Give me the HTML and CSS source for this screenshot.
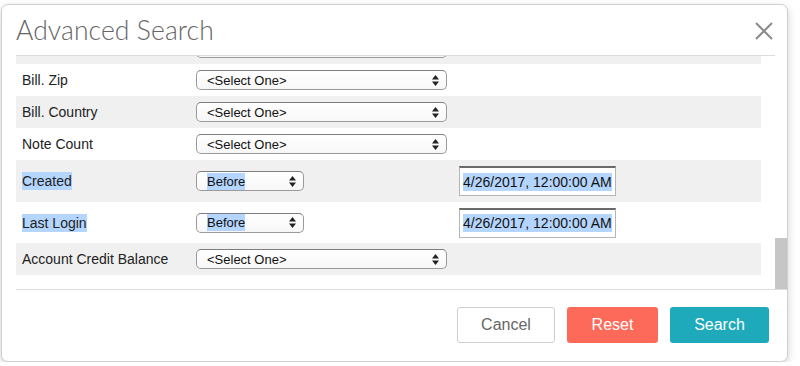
FILE: index.html
```html
<!DOCTYPE html>
<html lang="en">
<head>
  <meta charset="UTF-8">
  <title>Advanced Search</title>
  <link rel="stylesheet" href="styles.css">
</head>
<body>
  <div class="modal">
    <div class="modal-header">
      <h1>Advanced Search</h1>
      <span class="close">
        <svg width="18" height="18" viewBox="0 0 18 18"><path d="M1 1 L17 17 M17 1 L1 17" stroke="#8a8a8a" stroke-width="2" fill="none"/></svg>
      </span>
    </div>

    <div class="modal-body">
      <div class="rows">
        <!-- row scrolled mostly out of view, only its bottom edge shows -->
        <div class="row shade">
          <div class="label"></div>
          <div class="select wide"></div>
        </div>
        <div class="row">
          <div class="label">Bill. Zip</div>
          <div class="select wide"><span>&lt;Select One&gt;</span><svg class="arrows" width="7" height="11" viewBox="0 0 7 11"><path d="M3.5 0 L7 4.5 H0 Z M0 6.5 H7 L3.5 11 Z" fill="#222"/></svg></div>
        </div>
        <div class="row shade">
          <div class="label">Bill. Country</div>
          <div class="select wide"><span>&lt;Select One&gt;</span><svg class="arrows" width="7" height="11" viewBox="0 0 7 11"><path d="M3.5 0 L7 4.5 H0 Z M0 6.5 H7 L3.5 11 Z" fill="#222"/></svg></div>
        </div>
        <div class="row">
          <div class="label">Note Count</div>
          <div class="select wide"><span>&lt;Select One&gt;</span><svg class="arrows" width="7" height="11" viewBox="0 0 7 11"><path d="M3.5 0 L7 4.5 H0 Z M0 6.5 H7 L3.5 11 Z" fill="#222"/></svg></div>
        </div>
        <div class="row shade tall">
          <div class="label"><span class="hl">Created</span></div>
          <div class="select short"><span class="hl">Before</span><svg class="arrows" width="7" height="11" viewBox="0 0 7 11"><path d="M3.5 0 L7 4.5 H0 Z M0 6.5 H7 L3.5 11 Z" fill="#222"/></svg></div>
          <div class="date"><span class="hl">4/26/2017, 12:00:00 AM</span></div>
        </div>
        <div class="row tall short-tall">
          <div class="label"><span class="hl">Last Login</span></div>
          <div class="select short"><span class="hl">Before</span><svg class="arrows" width="7" height="11" viewBox="0 0 7 11"><path d="M3.5 0 L7 4.5 H0 Z M0 6.5 H7 L3.5 11 Z" fill="#222"/></svg></div>
          <div class="date"><span class="hl">4/26/2017, 12:00:00 AM</span></div>
        </div>
        <div class="row shade">
          <div class="label">Account Credit Balance</div>
          <div class="select wide"><span>&lt;Select One&gt;</span><svg class="arrows" width="7" height="11" viewBox="0 0 7 11"><path d="M3.5 0 L7 4.5 H0 Z M0 6.5 H7 L3.5 11 Z" fill="#222"/></svg></div>
        </div>
      </div>
      <div class="scrollbar"><div class="thumb"></div></div>
    </div>

    <div class="modal-footer">
      <button class="btn btn-cancel">Cancel</button>
      <button class="btn btn-reset">Reset</button>
      <button class="btn btn-search">Search</button>
    </div>
  </div>
</body>
</html>
```

FILE: styles.css
```css
* {
  margin: 0;
  padding: 0;
  box-sizing: border-box;
}
body {
  background: #fff;
  font-family: "Liberation Sans", Arial, sans-serif;
  color: #222;
}
/* Dialog card */
.modal {
  margin: 4px 0 0 1px;
  width: 787px;
  height: 358px;
  border: 1px solid #cfcfcf;
  border-radius: 7px;
  background: #fff;
  box-shadow: 0 3px 8px rgba(0, 0, 0, 0.18);
  overflow: hidden;
}
.modal-header {
  height: 51px;
  margin: 0 12px 0 14px;
  border-bottom: 1px solid #dcdcdc;
  display: flex;
  align-items: center;
  justify-content: space-between;
}
.modal-header h1 {
  font-family: Lato, "Open Sans", sans-serif;
  font-weight: 300;
  font-size: 26.5px;
  color: #666;
  letter-spacing: 0.1px;
}
.close {
  display: flex;
  margin-right: 2px;
  margin-top: 1px;
}
/* Scrolling list of criteria */
.modal-body {
  height: 233px;
  display: flex;
  overflow: hidden;
}
.rows {
  width: 745px;
  margin: -24px 14px 0 14px;
}
.row {
  height: 32px;
  display: grid;
  grid-template-columns: 180px 263px 1fr;
  align-items: center;
  font-size: 14px;
}
.row.shade {
  background: #f0f0f0;
}
.row.tall {
  height: 42px;
}
.row.short-tall {
  height: 41px;
}
.label {
  padding-left: 6px;
  color: #222;
}
.hl {
  background: #b4d5fd;
  padding: 1px 0;
}
.select {
  height: 20px;
  border: 1px solid #9a9a9a;
  border-top-color: #7d7d7d;
  border-radius: 5px;
  background: linear-gradient(#fff, #f7f7f7);
  display: flex;
  align-items: center;
  justify-content: space-between;
  padding: 0 7px 0 10px;
  font-size: 13px;
  color: #111;
}
.select.wide {
  width: 251px;
}
.select.short {
  width: 108px;
}
.arrows {
  display: block;
}
.date {
  width: 157px;
  height: 30px;
  border: 1px solid #b5b5b5;
  border-top: 2px solid #6a6a6a;
  background: #fff;
  display: flex;
  align-items: center;
  padding-left: 3px;
  font-size: 14px;
  color: #111;
}
.scrollbar {
  width: 12px;
  display: flex;
  flex-direction: column;
}
.thumb {
  margin-top: 182px;
  height: 51px;
  background: #c6c6c6;
}
/* Footer actions */
.modal-footer {
  height: 71px;
  margin: 0 0 0 14px;
  border-top: 1px solid #dcdcdc;
  display: flex;
  justify-content: flex-end;
  align-items: flex-start;
  gap: 12px;
  padding: 17px 18px 0 0;
}
.btn {
  height: 36px;
  border-radius: 3px;
  font-family: "Liberation Sans", Arial, sans-serif;
  font-size: 16px;
  cursor: pointer;
  border: 1px solid transparent;
}
.btn-cancel {
  width: 98px;
  background: #fff;
  border-color: #cfcfcf;
  color: #666;
}
.btn-reset {
  width: 91px;
  background: #fe6a5a;
  color: #fff;
}
.btn-search {
  width: 99px;
  background: #1faabc;
  color: #fff;
}
```
